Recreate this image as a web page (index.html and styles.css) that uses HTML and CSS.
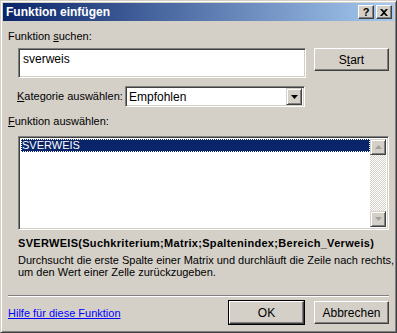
FILE: index.html
```html
<!DOCTYPE html>
<html lang="de">
<head>
    <meta charset="UTF-8">
    <title>Funktion einfügen</title>
    <link rel="stylesheet" href="styles.css">
</head>
<body>
    <div class="window">
        <div class="titlebar">
            <span class="title">Funktion einfügen</span>
            <div class="title-buttons">
                <div class="tbtn">?</div>
                <div class="tbtn close">
                    <svg width="8" height="7" viewBox="0 0 8 7"><path d="M0 0h2l2 2 2-2h2L5 3.5 8 7H6L4 5 2 7H0l3-3.5z" fill="#000"/></svg>
                </div>
            </div>
        </div>

        <div class="content">
            <div class="label">Funktion <u>s</u>uchen:</div>
            <div class="search-row">
                <div class="textbox">sverweis</div>
                <div class="button start">S<u>t</u>art</div>
            </div>

            <div class="cat-row">
                <div class="label"><u>K</u>ategorie auswählen:</div>
                <div class="select">
                    <span>Empfohlen</span>
                    <div class="arrow-btn">
                        <svg width="7" height="4" viewBox="0 0 7 4"><path d="M0 0h7L3.5 4z" fill="#000"/></svg>
                    </div>
                </div>
            </div>

            <div class="label"><u>F</u>unktion auswählen:</div>
            <div class="listbox">
                <div class="list-items">
                    <div class="item selected">SVERWEIS</div>
                </div>
                <div class="scrollbar">
                    <div class="sbtn">
                        <svg width="7" height="4" viewBox="0 0 7 4"><path d="M3.5 0L7 4H0z" fill="#a0a0a0"/></svg>
                    </div>
                    <div class="track"></div>
                    <div class="sbtn">
                        <svg width="7" height="4" viewBox="0 0 7 4"><path d="M0 0h7L3.5 4z" fill="#a0a0a0"/></svg>
                    </div>
                </div>
            </div>

            <div class="signature">SVERWEIS(Suchkriterium;Matrix;Spaltenindex;Bereich_Verweis)</div>
            <div class="desc">Durchsucht die erste Spalte einer Matrix und durchläuft die Zeile nach rechts,<br>um den Wert einer Zelle zurückzugeben.</div>

            <div class="separator"></div>

            <div class="bottom-row">
                <a class="help" href="#">Hilfe für diese Funktion</a>
                <div class="buttons">
                    <div class="button default">OK</div>
                    <div class="button">Abbrechen</div>
                </div>
            </div>
        </div>
    </div>
</body>
</html>
```

FILE: styles.css
```css
body {
    margin: 0;
    font-family: "Liberation Sans", Arial, sans-serif;
    font-size: 11px;
    color: #000;
    background: #d4d0c8;
}
u {
    text-decoration: underline;
}
.window {
    width: 397px;
    height: 333px;
    box-sizing: border-box;
    background: #d4d0c8;
    border-top: 1px solid #d4d0c8;
    border-left: 1px solid #d4d0c8;
    border-right: 1px solid #404040;
    border-bottom: 1px solid #404040;
    box-shadow: inset 1px 1px 0 #fff, inset -1px -1px 0 #808080;
    padding: 3px;
    display: flex;
    flex-direction: column;
}
.titlebar {
    height: 18px;
    margin: -1px -1px 0 -1px;
    background: linear-gradient(to right, #0a246a, #a6caf0);
    display: flex;
    align-items: center;
    justify-content: space-between;
    padding: 0 2px 0 3px;
}
.title {
    color: #fff;
    font-weight: bold;
    font-size: 12px;
}
.title-buttons {
    display: flex;
    gap: 2px;
}
.tbtn {
    width: 16px;
    height: 14px;
    box-sizing: border-box;
    background: #d4d0c8;
    border-top: 1px solid #fff;
    border-left: 1px solid #fff;
    border-right: 1px solid #404040;
    border-bottom: 1px solid #404040;
    box-shadow: inset -1px -1px 0 #808080;
    display: flex;
    align-items: center;
    justify-content: center;
    font-weight: bold;
    font-size: 11px;
    line-height: 1;
}
.content {
    padding: 0 4px;
    display: flex;
    flex-direction: column;
}
.label {
    line-height: 13px;
}
.content > .label:first-child {
    margin-top: 9px;
}
.search-row {
    display: flex;
    align-items: flex-start;
    margin-top: 5px;
    padding-left: 10px;
}
.textbox {
    width: 288px;
    height: 30px;
    box-sizing: border-box;
    background: #fff;
    border-top: 1px solid #808080;
    border-left: 1px solid #808080;
    border-right: 1px solid #fff;
    border-bottom: 1px solid #fff;
    box-shadow: inset 1px 1px 0 #404040, inset -1px -1px 0 #d4d0c8;
    padding: 3px 4px;
    font-size: 12px;
}
.button {
    width: 75px;
    height: 23px;
    box-sizing: border-box;
    background: #d4d0c8;
    border-top: 1px solid #fff;
    border-left: 1px solid #fff;
    border-right: 1px solid #404040;
    border-bottom: 1px solid #404040;
    box-shadow: inset -1px -1px 0 #808080;
    display: flex;
    align-items: center;
    justify-content: center;
    font-size: 12px;
}
.start {
    margin-left: 8px;
}
.cat-row {
    display: flex;
    align-items: center;
    margin-top: 8px;
    padding-left: 9px;
}
.cat-row .label {
    width: 108px;
}
.select {
    width: 180px;
    height: 21px;
    box-sizing: border-box;
    background: #fff;
    border-top: 1px solid #808080;
    border-left: 1px solid #808080;
    border-right: 1px solid #fff;
    border-bottom: 1px solid #fff;
    box-shadow: inset 1px 1px 0 #404040, inset -1px -1px 0 #d4d0c8;
    display: flex;
    align-items: center;
    justify-content: space-between;
    padding: 2px 2px 2px 3px;
    font-size: 12px;
}
.arrow-btn {
    width: 16px;
    height: 17px;
    box-sizing: border-box;
    background: #d4d0c8;
    border-top: 1px solid #d4d0c8;
    border-left: 1px solid #d4d0c8;
    border-right: 1px solid #404040;
    border-bottom: 1px solid #404040;
    box-shadow: inset 1px 1px 0 #fff, inset -1px -1px 0 #808080;
    display: flex;
    align-items: center;
    justify-content: center;
}
.cat-row + .label {
    margin-top: 8px;
}
.listbox {
    margin: 8px 0 0 10px;
    width: 371px;
    height: 94px;
    box-sizing: border-box;
    background: #fff;
    border-top: 1px solid #808080;
    border-left: 1px solid #808080;
    border-right: 1px solid #fff;
    border-bottom: 1px solid #fff;
    box-shadow: inset 1px 1px 0 #404040, inset -1px -1px 0 #d4d0c8;
    padding: 2px;
    display: flex;
}
.list-items {
    flex: 1;
}
.item {
    height: 13px;
    line-height: 13px;
    padding-left: 1px;
}
.item.selected {
    background: #0a246a;
    color: #fff;
    outline: 1px dotted #fff;
    outline-offset: -1px;
}
.scrollbar {
    width: 16px;
    display: flex;
    flex-direction: column;
}
.sbtn {
    height: 16px;
    box-sizing: border-box;
    background: #d4d0c8;
    border-top: 1px solid #d4d0c8;
    border-left: 1px solid #d4d0c8;
    border-right: 1px solid #404040;
    border-bottom: 1px solid #404040;
    box-shadow: inset 1px 1px 0 #fff, inset -1px -1px 0 #808080;
    display: flex;
    align-items: center;
    justify-content: center;
}
.track {
    flex: 1;
    background: repeating-conic-gradient(#fff 0 25%, #d4d0c8 0 50%) 0 0 / 2px 2px;
}
.signature {
    margin: 7px 0 0 10px;
    font-weight: bold;
    font-size: 11px;
    line-height: 13px;
    letter-spacing: 0.3px;
}
.desc {
    margin: 4px 0 0 10px;
    line-height: 12px;
    white-space: nowrap;
}
.separator {
    margin-top: 17px;
    height: 0;
    border-top: 1px solid #808080;
    border-bottom: 1px solid #fff;
}
.bottom-row {
    display: flex;
    justify-content: space-between;
    align-items: center;
    margin-top: 4px;
}
.help {
    color: #0000ff;
    font-size: 11px;
}
.buttons {
    display: flex;
    gap: 10px;
}
.button.default {
    outline: 1px solid #000;
}
```
